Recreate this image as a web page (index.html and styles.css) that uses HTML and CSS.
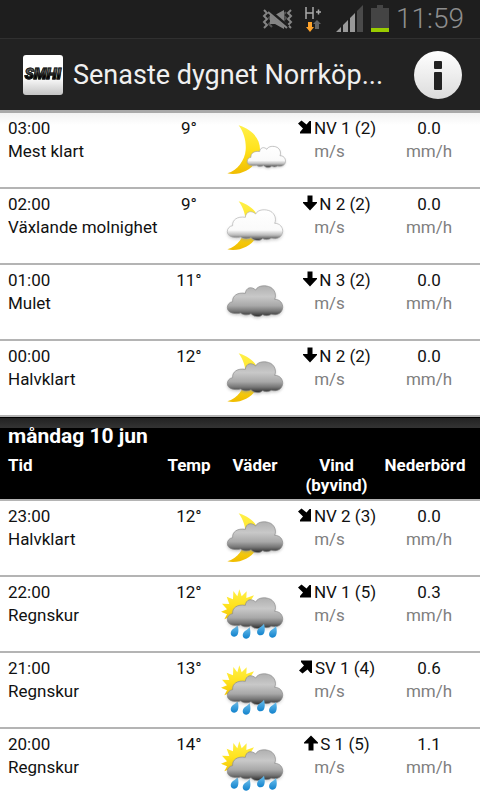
FILE: index.html
```html
<!DOCTYPE html>
<html lang="sv">
<head>
<meta charset="utf-8">
<meta name="viewport" content="width=device-width, initial-scale=1">
<title>Senaste dygnet Norrköp…</title>
<link rel="stylesheet" href="styles.css">
</head>
<body>
<svg class="sprite" width="0" height="0" aria-hidden="true">
  <defs>
    <linearGradient id="grey" x1="0" y1="0" x2="0" y2="1">
      <stop offset="0" stop-color="#b0b0b0"/><stop offset=".35" stop-color="#c8c8c8"/><stop offset=".65" stop-color="#a8a8a8"/><stop offset=".82" stop-color="#777"/><stop offset="1" stop-color="#2c2c2c"/>
    </linearGradient>
    <linearGradient id="white" x1="0" y1="0" x2="0" y2="1">
      <stop offset="0" stop-color="#fff"/><stop offset=".66" stop-color="#fafafa"/><stop offset=".82" stop-color="#bbb"/><stop offset="1" stop-color="#333"/>
    </linearGradient>
    <linearGradient id="gold" x1="0" y1="0" x2="0" y2="1">
      <stop offset="0" stop-color="#fff04a"/><stop offset=".5" stop-color="#ffe21c"/><stop offset="1" stop-color="#f0bc00"/>
    </linearGradient>
    <linearGradient id="water" x1="0" y1="0" x2="0" y2="1">
      <stop offset="0" stop-color="#6cc0ee"/><stop offset="1" stop-color="#1282cc"/>
    </linearGradient>
    <filter id="shade" x="-20%" y="-20%" width="140%" height="150%"><feGaussianBlur stdDeviation="4"/></filter>
    <path id="cloud" d="M52 131C52 121 59 114 68 113C66 96 82 84 106 88C108 70 124 66 137 78C144 64 166 62 182 70C194 77 200 92 194 106C210 106 219 118 218 131C216 148 202 155 184 151C176 156 166 156 158 152C148 161 132 159 123 149C112 155 98 153 92 147C76 152 52 147 52 131Z"/>
    <path id="moon" d="M86 40C130 54 150 82 150 112C149 160 100 194 52 184C82 176 105 144 107 114C109 88 102 62 86 40Z" fill="url(#gold)"/>
    <path id="drop" d="M10-19C14-4 14 15 0 16C-13 16-14 1-4-7C3-12 7-14 10-19Z" fill="url(#water)"/>
  </defs>
  <symbol id="w-grey" viewBox="21 3 228 222">
    <use href="#cloud" y="5" fill="#999" opacity=".55" filter="url(#shade)"/>
    <use href="#cloud" fill="url(#grey)" stroke="#8a8a8a" stroke-width="2"/>
  </symbol>
  <symbol id="w-half" viewBox="21 3 228 222">
    <use href="#moon"/>
    <use href="#cloud" y="5" fill="#999" opacity=".55" filter="url(#shade)"/>
    <use href="#cloud" fill="url(#grey)" stroke="#8a8a8a" stroke-width="2"/>
  </symbol>
  <symbol id="w-white" viewBox="21 3 228 222">
    <use href="#moon"/>
    <use href="#cloud" y="5" fill="#999" opacity=".45" filter="url(#shade)"/>
    <use href="#cloud" fill="url(#white)" stroke="#b0b0b0" stroke-width="2"/>
  </symbol>
  <symbol id="w-clear" viewBox="21 3 228 222">
    <use href="#moon"/>
    <g transform="translate(76 58) scale(.69)">
      <use href="#cloud" y="5" fill="#999" opacity=".45" filter="url(#shade)"/>
      <use href="#cloud" fill="url(#white)" stroke="#aaa" stroke-width="3"/>
    </g>
  </symbol>
  <symbol id="w-rain" viewBox="21 3 228 222">
    <path fill="url(#gold)" d="M88 40L95 61L110 46L109 66L132 58L121 76L143 80L124 92L140 112L90 140L58 124L43 130L51 115L33 107L51 100L36 83L58 84L50 62L69 70L70 45L82 61Z"/>
    <use href="#drop" x="73" y="166"/><use href="#drop" x="109" y="172"/>
    <use href="#cloud" y="5" fill="#999" opacity=".45" filter="url(#shade)"/>
    <use href="#cloud" fill="url(#grey)" stroke="#8a8a8a" stroke-width="2"/>
    <use href="#drop" x="152" y="162"/><use href="#drop" x="188" y="169"/>
  </symbol>
  <symbol id="a-down" viewBox="0 0 16 16"><path d="M5.500 .5h5v6.500H15v1L8 15.500 1 8V7h4.500z"/></symbol>
  <symbol id="a-up" viewBox="0 0 16 16"><path d="M5.500 15.500h5V8.500H15v-1L8 .5 1 7.500v1h4.500z"/></symbol>
  <symbol id="a-se" viewBox="0 0 16 16"><path d="M1 4.500L4.500 1.500l5 4 3-3.500H14V14.500H3V13l3-3.500z"/></symbol>
  <symbol id="a-ne" viewBox="0 0 16 16"><path d="M1 11.500L4.500 14.500l5-4 3 3.500H14V1.500H3V3l3 3.500z"/></symbol>
</svg>

<div class="status">
  <svg class="status-icons" viewBox="0 0 130 38" role="img" aria-label="Status">
    <g fill="none" stroke="#858585" stroke-width="2">
      <path d="M4 10l3 3-3 3 3 3-3 3 3 3-3 3"/><path d="M9 12l3 3-3 3 3 3-3 3 3 3" stroke="#555"/>
      <path d="M31 10l-3 3 3 3-3 3 3 3-3 3 3 3"/><path d="M26 12l-3 3 3 3-3 3 3 3-3 3" stroke="#555"/>
    </g>
    <path fill="#858585" d="M10 15h5l9-5v19l-9-5h-5z"/>
    <path d="M8 10l20 17" stroke="#1e1e1e" stroke-width="4"/><path d="M8 12l19 16" stroke="#858585" stroke-width="2"/>
    <path d="M46 7v12M53 7v12M46 13h7M56 12h5M58.500 9.500v5" fill="none" stroke="#aaa" stroke-width="1.500"/>
    <path fill="#ffa32b" d="M48 22h4v5h2l-4 5-4-5h2z"/><path fill="#666" d="M55 29h4v-5h2l-4-4-4 4h2z"/>
    <path fill="#999" d="M76 32l5-5v5zM83 32v-7l5-5v12zM90 32V18l5-5v19z"/>
    <path fill="#4a4a4a" d="M97 32V11l6-6v27z"/>
    <path fill="#444" d="M117 5h6v3h6v20h-18V8h6z"/><path fill="#99cc00" d="M111 28h18v4h-18z"/>
  </svg>
  <span class="clock">11:59</span>
</div>

<header class="bar">
  <div class="logo"><span>SMHI</span></div>
  <h1>Senaste dygnet Norrköp...</h1>
  <button class="info" type="button" aria-label="Information">
    <svg viewBox="0 0 48 48"><rect x="20" y="10" width="8" height="8" rx="1"/><rect x="20" y="21" width="8" height="18" rx="1"/></svg>
  </button>
</header>

<main class="list">
  <table>
    <colgroup><col><col class="c-temp"><col class="c-sky"><col class="c-wind"><col class="c-rain"></colgroup>
    <tbody class="first">
      <tr><td>03:00<br>Mest klart</td><td>9°</td><td><svg class="sky"><use href="#w-clear"/></svg></td><td><span class="wind"><svg><use href="#a-se"/></svg>NV 1 (2)</span><span class="unit">m/s</span></td><td>0.0<span class="unit">mm/h</span></td></tr>
      <tr><td>02:00<br>Växlande molnighet</td><td>9°</td><td><svg class="sky"><use href="#w-white"/></svg></td><td><span class="wind"><svg><use href="#a-down"/></svg>N 2 (2)</span><span class="unit">m/s</span></td><td>0.0<span class="unit">mm/h</span></td></tr>
      <tr><td>01:00<br>Mulet</td><td>11°</td><td><svg class="sky"><use href="#w-grey"/></svg></td><td><span class="wind"><svg><use href="#a-down"/></svg>N 3 (2)</span><span class="unit">m/s</span></td><td>0.0<span class="unit">mm/h</span></td></tr>
      <tr><td>00:00<br>Halvklart</td><td>12°</td><td><svg class="sky"><use href="#w-half"/></svg></td><td><span class="wind"><svg><use href="#a-down"/></svg>N 2 (2)</span><span class="unit">m/s</span></td><td>0.0<span class="unit">mm/h</span></td></tr>
    </tbody>
    <tbody>
      <tr class="day"><th colspan="5" scope="rowgroup">måndag 10 jun</th></tr>
      <tr class="heads"><th scope="col">Tid</th><th scope="col">Temp</th><th scope="col">Väder</th><th scope="col">Vind<br>(byvind)</th><th scope="col">Nederbörd</th></tr>
      <tr><td>23:00<br>Halvklart</td><td>12°</td><td><svg class="sky"><use href="#w-half"/></svg></td><td><span class="wind"><svg><use href="#a-se"/></svg>NV 2 (3)</span><span class="unit">m/s</span></td><td>0.0<span class="unit">mm/h</span></td></tr>
      <tr><td>22:00<br>Regnskur</td><td>12°</td><td><svg class="sky"><use href="#w-rain"/></svg></td><td><span class="wind"><svg><use href="#a-se"/></svg>NV 1 (5)</span><span class="unit">m/s</span></td><td>0.3<span class="unit">mm/h</span></td></tr>
      <tr><td>21:00<br>Regnskur</td><td>13°</td><td><svg class="sky"><use href="#w-rain"/></svg></td><td><span class="wind"><svg><use href="#a-ne"/></svg>SV 1 (4)</span><span class="unit">m/s</span></td><td>0.6<span class="unit">mm/h</span></td></tr>
      <tr><td>20:00<br>Regnskur</td><td>14°</td><td><svg class="sky"><use href="#w-rain"/></svg></td><td><span class="wind"><svg><use href="#a-up"/></svg>S 1 (5)</span><span class="unit">m/s</span></td><td>1.1<span class="unit">mm/h</span></td></tr>
    </tbody>
  </table>
</main>
</body>
</html>
```
FILE: styles.css
```css
* { box-sizing: border-box; }
body {
  margin: 0;
  height: 100vh;
  display: flex;
  flex-direction: column;
  background: #fff;
  color: #111;
  font: 17px/23px Roboto, "Liberation Sans", sans-serif;
}
.sprite { position: absolute; }

.status {
  flex: none;
  display: flex;
  justify-content: flex-end;
  align-items: center;
  gap: 6px;
  height: 38px;
  padding-right: 16px;
  background: #1e1e1e;
}
.status-icons { width: 130px; height: 38px; }
.clock { color: #8e8e8e; font-size: 28px; font-weight: 300; line-height: 38px; }

.bar {
  flex: none;
  display: flex;
  align-items: center;
  gap: 10px;
  height: 75px;
  padding: 0 18px 0 23px;
  background: #222;
  border-top: 1px solid #303030;
  border-bottom: 3px solid #a9a9a9;
}
.logo {
  flex: none;
  width: 40px;
  height: 40px;
  border-radius: 3px;
  background: linear-gradient(#fff 55%, #c4c4c4);
  font-size: 15px;
  font-style: italic;
  font-weight: 900;
  line-height: 38px;
  text-align: center;
}
.logo span {
  display: block;
  background: linear-gradient(#666 45%, #000 55%);
  background-clip: text;
  color: transparent;
  -webkit-text-stroke: 1px #1a1a1a;
}
h1 {
  flex: 1;
  margin: 0;
  color: #f0f0f0;
  font-size: 27px;
  font-weight: 400;
  line-height: 36px;
  white-space: nowrap;
}
.info {
  flex: none;
  width: 48px;
  height: 48px;
  padding: 0;
  border: 0;
  border-radius: 50%;
  background: linear-gradient(#fff, #dcdcdc);
}
.info svg { display: block; width: 48px; height: 48px; fill: #222; }

.list { flex: 1; min-height: 0; overflow-y: auto; scrollbar-width: none; }
table { width: 100%; table-layout: fixed; border-collapse: separate; border-spacing: 0; }
.c-temp { width: 56px; }
.c-sky { width: 76px; }
.c-wind { width: 87px; }
.c-rain { width: 100px; }
td {
  height: 76px;
  padding: 4px 0 0;
  border-bottom: 2px solid #b4b4b4;
  text-align: center;
  vertical-align: top;
  white-space: nowrap;
}
td:first-child, th:first-child { padding-left: 8px; text-align: left; }
td:nth-child(3) { padding: 0; }
td:last-child { padding-right: 2px; }
.first tr:first-child { background: linear-gradient(#f2f2f2, #fff 12px); }
.sky { display: block; width: 100%; height: 74px; }
.wind { display: flex; justify-content: center; gap: 1px; }
.wind svg { width: 16px; height: 16px; margin-top: 2px; }
.unit { display: block; color: #808080; }
td:nth-child(4) .unit { padding-right: 14px; }

th { padding: 0; background: #000; color: #fff; vertical-align: top; }
.day th {
  height: 38px;
  padding-top: 8px;
  background: linear-gradient(#222, #333) 0 1px / 100% 10px no-repeat #000;
  font-size: 21px;
}
.heads th {
  height: 46px;
  border-bottom: 2px solid #b4b4b4;
  font-size: 17px;
  line-height: 20px;
}
.heads th:last-child { padding-right: 10px; }
```
